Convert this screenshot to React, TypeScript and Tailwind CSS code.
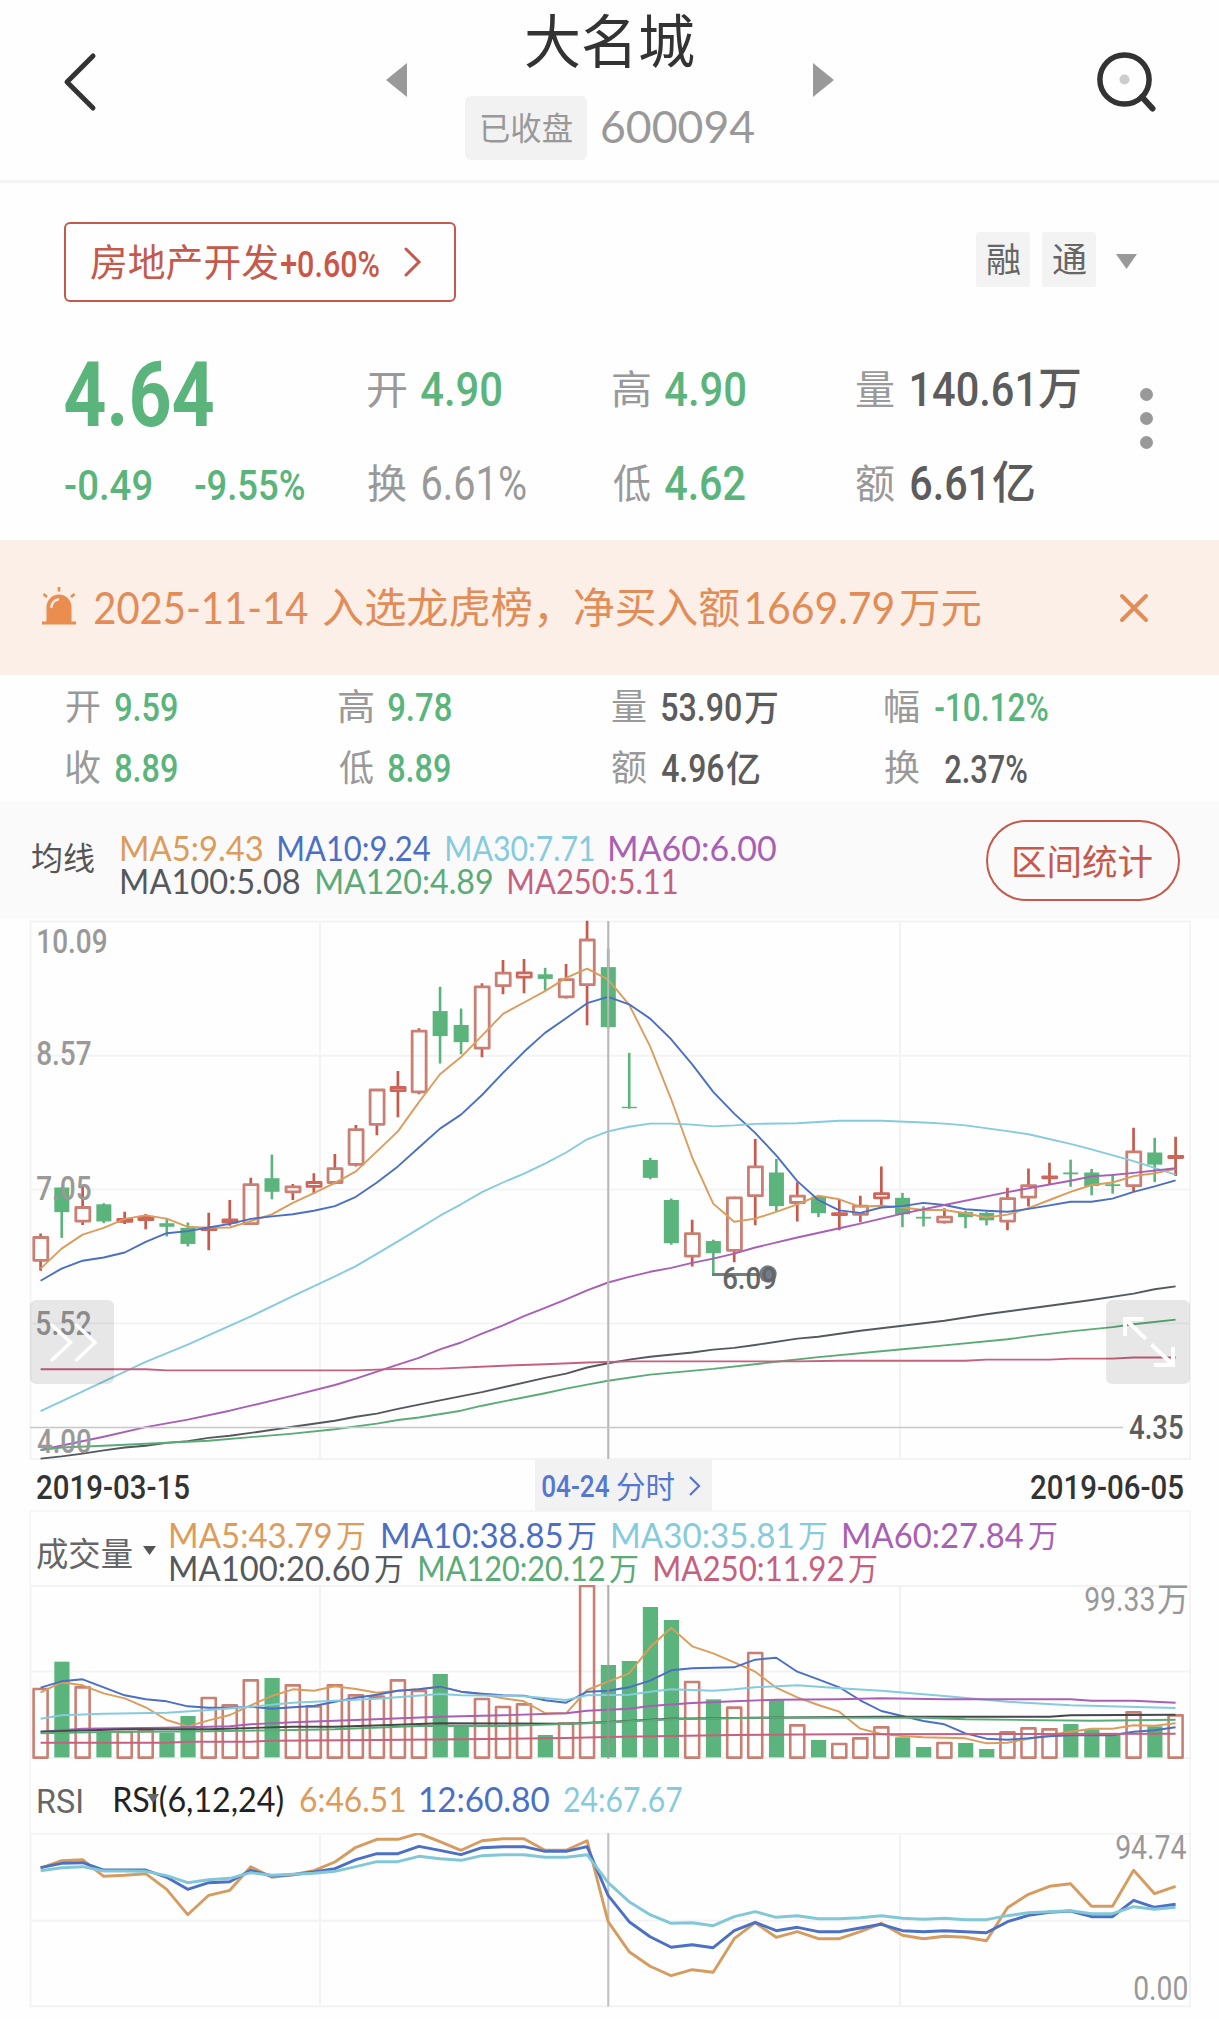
import { useLayoutEffect, useRef } from "react";
import type { ReactNode } from "react";

const DIN = "font-['Roboto','Noto_Sans_CJK_SC',sans-serif]";
const GEO = "font-['Lato','Noto_Sans_CJK_SC',sans-serif]";
const CJK = "font-['Noto_Sans_CJK_SC',sans-serif]";

type FitProps = { w: number; text: string; className?: string; cjk?: boolean; geo?: boolean };

/** One line of text whose ink is fitted to a given width. */
function Fit({ w, text, className = "", cjk, geo }: FitProps) {
  const ref = useRef<HTMLSpanElement>(null);
  useLayoutEffect(() => {
    const el = ref.current;
    const ctx = document.createElement("canvas").getContext("2d");
    if (!el || !ctx) return;
    const cs = getComputedStyle(el);
    ctx.font = `${cs.fontWeight} ${cs.fontSize} ${cs.fontFamily}`;
    const m = ctx.measureText(text);
    const ink = m.actualBoundingBoxLeft + m.actualBoundingBoxRight;
    const s = w / ink;
    el.style.transform = `translateX(${m.actualBoundingBoxLeft * s}px) scaleX(${s})`;
  }, [w, text]);
  return (
    <span className="inline-flex h-[1em] shrink-0 items-center leading-none" style={{ width: w }}>
      <span
        ref={ref}
        className={`inline-block origin-left whitespace-nowrap leading-none ${cjk ? CJK + " -mt-[0.1em]" : geo ? GEO : DIN} ${className}`}
      >
        {text}
      </span>
    </span>
  );
}

const cx = (i: number) => 40.6 + i * 21.0185;

const ORANGE = "#dc9c5c";
const BLUE = "#4a6fc4";
const CYAN = "#86cbdd";
const PURPLE = "#a85fb4";
const DARK = "#55585c";
const GREEN = "#5bab77";
const PINK = "#c6607f";
const UP = "#ca7f73";
const UPWICK = "#c65a4c";
const DOWN = "#5ab47b";

/** "index value" pairs, comma separated; missing indices are joined straight. */
function Line({ d, y, color, width = 1.9 }: { d: string; y: (v: number) => number; color: string; width?: number }) {
  const pts = d
    .split(",")
    .map((p) => p.trim().split(" ").map(Number))
    .map(([i, v]) => `${cx(i).toFixed(1)},${y(v).toFixed(1)}`)
    .join(" ");
  return <polyline points={pts} fill="none" stroke={color} strokeWidth={width} strokeLinejoin="round" />;
}
const dense = (a: number[]) => a.map((v, i) => `${i} ${v}`).join(",");

const candles: [string, number, number, number, number][] = [
  ["r", 906, 917, 981, 1010], ["g", 777, 777, 846, 918], ["r", 775, 833, 871, 882], ["g", 821, 824, 872, 877],
  ["r", 845, 866, 872, 879], ["r", 851, 860, 867, 894], ["g", 865, 877, 887, 914], ["g", 875, 890, 935, 942],
  ["r", 848, 891, 895, 953], ["r", 812, 868, 874, 884], ["r", 750, 769, 878, 882], ["g", 685, 751, 789, 810],
  ["r", 767, 775, 789, 812], ["r", 737, 763, 774, 795], ["r", 683, 724, 763, 768], ["r", 602, 615, 712, 718],
  ["r", 502, 504, 600, 631], ["r", 451, 497, 506, 580], ["r", 331, 339, 509, 516], ["g", 215, 283, 353, 430],
  ["g", 276, 322, 370, 404], ["r", 205, 215, 387, 412], ["r", 140, 177, 212, 236], ["r", 137, 176, 188, 233],
  ["g", 162, 180, 193, 225], ["r", 151, 195, 243, 248], ["r", 30, 84, 209, 323], ["g", 108, 160, 328, 332],
  ["g", 400, 551, 555, 556], ["g", 694, 700, 750, 754], ["g", 808, 812, 933, 937], ["r", 867, 906, 969, 998],
  ["g", 923, 927, 961, 1022], ["r", 803, 806, 953, 986], ["r", 641, 719, 800, 883], ["g", 697, 735, 829, 843],
  ["r", 762, 801, 819, 872], ["g", 800, 803, 849, 860], ["r", 812, 850, 853, 897], ["r", 800, 829, 852, 874],
  ["r", 718, 794, 806, 826], ["g", 792, 806, 852, 888], ["g", 830, 859, 864, 886], ["r", 835, 860, 873, 878],
  ["g", 842, 846, 860, 891], ["g", 846, 848, 869, 883], ["r", 778, 808, 871, 897], ["r", 724, 772, 804, 830],
  ["r", 708, 747, 750, 770], ["g", 699, 735, 740, 775], ["g", 725, 735, 773, 799], ["g", 740, 768, 773, 794],
  ["r", 610, 677, 772, 788], ["g", 638, 679, 713, 762], ["r", 635, 690, 693, 745],
];

const ma5 = [1004, 948, 909, 890, 865, 855, 864, 887, 890, 889, 871, 852, 820, 793, 764, 732, 676, 620, 538, 460, 412, 352, 291, 259, 227, 190, 164, 195, 265, 382, 530, 693, 822, 873, 864, 845, 824, 800, 810, 831, 828, 833, 840, 840, 849, 861, 853, 835, 812, 789, 770, 763, 745, 737, 725];
const ma10 = [1038, 1004, 982, 973, 959, 929, 905, 899, 889, 879, 865, 858, 852, 842, 829, 803, 763, 718, 665, 612, 573, 518, 456, 397, 344, 303, 261, 243, 264, 304, 362, 432, 509, 570, 624, 687, 759, 812, 841, 848, 833, 829, 820, 826, 838, 842, 845, 837, 827, 817, 817, 808, 789, 774, 757];

const ky = (v: number) => v / 2.8 - 9;

const GRID = "#f3f3f3";

function PriceChart() {
  return (
    <svg width="1219" height="541" viewBox="0 0 1219 541" className="block">
      <g stroke={GRID} strokeWidth="2" fill="none">
        <path d="M30.5 2.5H1190V540H30.5ZM30 136.7H1190M30 270.6H1190M30 404.6H1190M320 2V540M609 2V540M900 2V540" />
      </g>
      {candles.map(([t, h, a, b, l], i) => {
        const x = cx(i);
        if (t === "g")
          return (
            <g key={i} fill={DOWN}>
              <rect x={x - 1.2} y={ky(h)} width="2.6" height={ky(l) - ky(h)} />
              <rect x={x - 7.3} y={ky(a)} width="15" height={Math.max(1.4, ky(b) - ky(a))} />
            </g>
          );
        return (
          <g key={i}>
            <path d={`M${x} ${ky(h)}V${ky(a)}M${x} ${ky(b)}V${ky(l)}`} stroke={UPWICK} strokeWidth="2.7" fill="none" />
            <rect
              x={x - 6.8}
              y={ky(a)}
              width="14"
              height={Math.max(0.4, ky(b) - ky(a))}
              fill="none"
              stroke={b - a < 13 ? "#ce6558" : UP}
              strokeWidth={2.8}
              strokeLinejoin="round"
            />
          </g>
        );
      })}
      <Line y={ky} color={ORANGE} d={dense(ma5)} />
      <Line y={ky} color={BLUE} d={dense(ma10)} />
      <Line y={ky} color={CYAN} d="0 1403,5 1265,7 1217,10 1138,12 1081,14 1026,15 997,17 928,18 892,19 856,20 824,21 790,22 763,23 738,24 710,25 679,26 642,27 620,28 607,29 598,30 598,31 601,32 606,33 603,34 599,36 597,38 590,40 590,42 595,43 598,44 603,46 619,47 628,49 655,50 670,52 703,54 741" />
      <Line y={ky} color={PURPLE} d="0 1512,3 1475,5 1448,7 1427,9 1402,10 1388,12 1360,14 1330,15 1312,17 1273,18 1254,19 1230,20 1211,21 1186,22 1163,23 1137,24 1114,25 1090,26 1065,27 1043,28 1027,29 1013,30 1002,31 988,32 976,33 962,34 945,36 917,38 891,39 878,41 850,43 826,46 790,49 758,50 746,51 742,52 736,54 723" />
      <Line y={ky} color={DARK} d="0 1536,1 1530,2 1522,3 1513,4 1505,5 1500,6 1492,7 1487,8 1478,9 1472,10 1464,12 1447,14 1430,15 1419,16 1410,17 1397,18 1385,19 1373,21 1350,24 1310,25 1298,26 1281,27 1269,28 1259,29 1251,31 1239,32 1231,33 1226,34 1218,36 1200,37 1195,39 1178,41 1164,43 1150,45 1132,48 1108,50 1092,52 1074,53 1062,54 1054" />
      <Line y={ky} color={GREEN} d="0 1512,1 1505,3 1500,7 1489,8 1486,10 1476,12 1466,14 1454,16 1438,17 1428,18 1421,20 1402,21 1388,24 1353,25 1340,26 1329,27 1318,29 1301,32 1285,35 1265,37 1252,41 1230,43 1219,46 1202,47 1194,49 1180,51 1168,52 1160,54 1147" />
      <Line y={ky} color={PINK} d="0 1286,5 1286,6 1289,15 1289,17 1285,19 1284,22 1276,24 1272,26 1267,28 1264,36 1264,38 1262,44 1262,45 1259,48 1259,49 1256,51 1256,52 1253,54 1253" />
      <path d="M608.2 2V540" stroke="#b8b8b8" strokeWidth="2" />
      <path d="M30 508.5H1123" stroke="#c8c8c8" strokeWidth="1.6" />
      <path d="M712 355.5H768" stroke="#727d89" strokeWidth="3" />
      <circle cx="768" cy="355" r="8.7" fill="#727d89" />
    </svg>
  );
}

const vols: [string, number][] = [
  ["r", 714], ["g", 635], ["r", 709], ["g", 848], ["r", 843], ["r", 840], ["g", 848], ["g", 798], ["r", 741], ["r", 763], ["r", 688],
  ["g", 684], ["r", 703], ["r", 766], ["r", 703], ["r", 733], ["r", 737], ["r", 688], ["r", 720], ["g", 672], ["g", 830], ["r", 744],
  ["r", 768], ["r", 760], ["g", 855], ["r", 818], ["r", 405], ["g", 645], ["g", 633], ["g", 471], ["g", 510], ["r", 693], ["g", 748],
  ["r", 770], ["r", 606], ["g", 748], ["r", 823], ["g", 870], ["r", 879], ["r", 862], ["r", 829], ["g", 862], ["g", 891], ["r", 876],
  ["g", 879], ["g", 897], ["r", 844], ["r", 832], ["r", 835], ["g", 822], ["g", 838], ["g", 855], ["r", 784], ["g", 829], ["r", 793],
];
const v5 = [727, 697, 706, 730, 745, 772, 810, 829, 811, 795, 766, 738, 718, 722, 709, 717, 728, 722, 718, 710, 725, 733, 745, 754, 789, 790, 720, 695, 670, 592, 533, 589, 610, 637, 665, 713, 742, 765, 785, 836, 852, 858, 862, 863, 865, 880, 878, 866, 856, 845, 836, 836, 826, 827, 820];
const v10 = [713, 694, 688, 712, 736, 748, 754, 769, 773, 773, 770, 776, 772, 768, 755, 743, 734, 722, 718, 710, 725, 731, 736, 737, 751, 758, 725, 722, 712, 692, 661, 655, 653, 652, 629, 623, 665, 688, 712, 751, 783, 798, 813, 823, 850, 866, 869, 865, 859, 856, 855, 856, 845, 841, 832];

const vy = (v: number) => v / 3 - 135;

function VolumeChart() {
  return (
    <svg width="1219" height="174" viewBox="0 0 1219 174" className="block">
      <path d="M30.5 1H1190V173H30.5ZM30 86.500H1190M320 1V173M609 1V173M900 1V173" stroke={GRID} strokeWidth="2" fill="none" />
      {vols.map(([t, v], i) =>
        t === "g" ? (
          <rect key={i} x={cx(i) - 7.3} y={vy(v)} width="15.2" height={172.4 - vy(v)} fill={DOWN} />
        ) : (
          <rect key={i} x={cx(i) - 7} y={vy(v) + 1} width="14" height={171.6 - vy(v)} fill="none" stroke={UP} strokeWidth="2.6" strokeLinejoin="round" />
        ),
      )}
      <Line y={vy} color={ORANGE} d={dense(v5)} />
      <Line y={vy} color={BLUE} d={dense(v10)} />
      <Line y={vy} color={CYAN} d="0 806,1 796,3 791,6 788,8 780,10 770,12 758,14 752,16 746,19 732,20 736,22 737,23 739,25 750,26 736,28 734,29 725,30 718,32 722,33 718,34 712,36 706,38 715,40 722,43 738,46 755,49 766,54 774" />
      <Line y={vy} color={PURPLE} d="0 845,2 836,6 833,9 829,10 823,12 817,15 810,19 800,22 796,25 790,26 782,28 776,29 768,31 759,33 754,35 749,38 748,40 745,43 748,49 748,50 752,52 752,54 758" />
      <Line y={vy} color="#45484b" d="0 845,4 838,8 838,12 830,14 830,17 824,19 820,25 821,27 816,30 806,33 804,37 802,40 800,48 800,49 796,54 794" />
      <Line y={vy} color={GREEN} d="0 850,3 846,8 844,12 840,14 838,18 828,22 828,26 820,30 808,34 803,42 803,44 808,50 812,54 809" />
      <Line y={vy} color={PINK} d="0 878,6 878,7 875,10 875,11 872,16 870,20 868,25 864,27 861,30 858,33 855,38 853,54 851" />
      <path d="M608.2 0V174" stroke="#999" strokeOpacity="0.75" strokeWidth="2" />
    </svg>
  );
}

const r6 = [294, 272, 269, 319, 316, 311, 358, 434, 376, 361, 290, 322, 314, 302, 276, 232, 208, 208, 190, 215, 241, 212, 206, 206, 241, 241, 212, 455, 545, 589, 617, 599, 607, 506, 458, 502, 485, 506, 506, 485, 460, 496, 506, 499, 502, 512, 413, 373, 349, 341, 409, 409, 301, 371, 349];
const r12 = [293, 280, 278, 300, 300, 300, 322, 358, 338, 335, 301, 318, 314, 306, 296, 269, 251, 251, 229, 241, 254, 233, 230, 230, 244, 244, 230, 376, 455, 500, 532, 524, 533, 482, 457, 482, 472, 485, 485, 474, 463, 482, 485, 482, 485, 488, 455, 436, 427, 423, 440, 440, 391, 412, 403];
const r24 = [302, 293, 290, 303, 303, 304, 317, 338, 329, 325, 308, 316, 313, 310, 304, 290, 275, 275, 259, 266, 271, 257, 254, 254, 262, 262, 254, 338, 395, 434, 460, 458, 467, 440, 425, 442, 437, 446, 446, 443, 437, 445, 448, 445, 449, 449, 437, 428, 425, 422, 431, 431, 410, 418, 412];

const ry = (v: number) => v / 3 - 63;

function RsiChart() {
  return (
    <svg width="1219" height="176" viewBox="0 0 1219 176" className="block">
      <path d="M30.5 0.500H1190V173.300H30.5ZM30 87.700H1190M320 1V173M609 1V173M900 1V173" stroke={GRID} strokeWidth="2" fill="none" />
      <path d="M608.2 0V173.500" stroke="#c2c2c2" strokeWidth="2" />
      <Line y={ry} color="#d69c5f" width={2.9} d={dense(r6)} />
      <Line y={ry} color="#4b70c4" width={2.9} d={dense(r12)} />
      <Line y={ry} color="#82c7d7" width={2.9} d={dense(r24)} />
    </svg>
  );
}

function Cell({ label, ls, gap, children }: { label: string; ls: number; gap: number; children: ReactNode }) {
  return (
    <div className="flex items-center" style={{ gap }}>
      <div className="-mt-[3px] flex"><Fit cjk w={ls} text={label} className="text-[#999]" /></div>
      {children}
    </div>
  );
}

function Down({ w, h, color }: { w: number; h: number; color: string }) {
  return (
    <svg width={w} height={h} viewBox="0 0 10 10" preserveAspectRatio="none" className="block shrink-0">
      <path d="M0 0H10L5 10Z" fill={color} />
    </svg>
  );
}

const axis: [string, string, number][] = [
  ["10.09", "top-[6px] left-[38px]", 68],
  ["8.57", "top-[118px] left-[37px]", 54],
  ["7.05", "top-[253px] left-[37px]", 54],
  ["5.52", "top-[388px] left-[37px]", 54],
  ["4.00", "top-[506px] left-[37px]", 54],
];

export default function App() {
  return (
    <div className="w-[1219px] h-[2019px] overflow-hidden bg-[#fefefe] text-[#333]">
      <header className="flex h-[183px] items-start border-b-[3px] border-[#f4f4f4]">
        <svg width="36" height="62" viewBox="0 0 36 62" className="mt-[51px] ml-[62px] block" fill="none" stroke="#333" strokeWidth="5" strokeLinecap="round" strokeLinejoin="round">
          <path d="M31 5L5 31L31 57" />
        </svg>
        <svg width="21" height="34" className="mt-[63px] ml-[288px] block"><path d="M21 0V34L0 17Z" fill="#999" /></svg>
        <div className="ml-[58px] flex w-[290px] flex-col">
          <div className="mt-[12px] ml-[61px] flex text-[58px]"><Fit cjk w={168} text="大名城" className="text-[#333]" /></div>
          <div className="mt-[26px] flex items-center">
            <div className="flex h-[64px] w-[122px] items-center justify-center rounded-[6px] bg-[#f2f2f2] text-[32px]">
              <Fit cjk w={91} text="已收盘" className="text-[#999]" />
            </div>
            <div className="-mt-[3px] ml-[15px] flex text-[45px]"><Fit geo w={152} text="600094" className="text-[#999]" /></div>
          </div>
        </div>
        <svg width="21" height="34" className="mt-[63px] ml-[58px] block"><path d="M0 0V34L21 17Z" fill="#999" /></svg>
        <svg width="66" height="66" viewBox="0 0 66 66" className="mt-[49px] ml-[260px] block">
          <circle cx="30.5" cy="30.5" r="24.6" fill="none" stroke="#333" strokeWidth="5.5" />
          <path d="M48 48L58.5 59.5" stroke="#333" strokeWidth="6" strokeLinecap="round" />
          <circle cx="30.5" cy="30.5" r="5" fill="#ccc" />
        </svg>
      </header>

      <section className="flex h-[119px] items-end pl-[64px]">
        <div className="flex h-[80px] w-[392px] items-center rounded-[6px] border-2 border-[#c4594c] pl-[25px]">
          <div className="-mt-[1px] flex text-[38px]"><Fit cjk w={187} text="房地产开发" className="text-[#c4594c]" /></div>
          <div className="mt-[5px] ml-[3px] flex text-[37px]"><Fit w={98} text="+0.60%" className="font-medium text-[#cb5546]" /></div>
          <svg width="18" height="30" viewBox="0 0 18 30" className="ml-[25px] block" fill="none" stroke="#c4594c" strokeWidth="3" strokeLinecap="round"><path d="M2 2L15 15L2 28" /></svg>
        </div>
        <div className="mb-[15px] ml-[520px] flex items-center text-[34px]">
          <div className="flex h-[55px] w-[54px] items-center justify-center rounded-[3px] bg-[#f3f3f3]"><Fit cjk w={33} text="融" className="text-[#666]" /></div>
          <div className="ml-[12px] flex h-[55px] w-[54px] items-center justify-center rounded-[3px] bg-[#f3f3f3]"><Fit cjk w={33} text="通" className="text-[#666]" /></div>
          <div className="mt-[3px] ml-[20px]"><Down w={21} h={15} color="#999" /></div>
        </div>
      </section>

      <section className="flex h-[238px] pl-[65px]">
        <div className="flex w-[303px] flex-col pt-[48px]">
          <div className="flex text-[91px]"><Fit w={148} text="4.64" className="font-bold text-[#5ab47b]" /></div>
          <div className="mt-[23px] flex gap-[44px] text-[43px]">
            <Fit w={86} text="-0.49" className="font-medium text-[#5ab47b]" />
            <Fit w={109} text="-9.55%" className="font-medium text-[#5ab47b]" />
          </div>
        </div>
        <div className="grid grid-cols-[245px_243px_260px] grid-rows-[94px_94px] pt-[41px] text-[40px]">
          <Cell label="开" ls={38} gap={15}><div className="flex text-[48px]"><Fit w={80} text="4.90" className="font-medium text-[#5ab47b]" /></div></Cell>
          <Cell label="高" ls={37} gap={15}><div className="flex text-[48px]"><Fit w={80} text="4.90" className="font-medium text-[#5ab47b]" /></div></Cell>
          <Cell label="量" ls={38} gap={17}>
            <div className="flex items-center gap-[9px] text-[48px]"><Fit w={119} text="140.61" className="font-medium text-[#5c5c5c]" /><div className="-mt-[5px] flex text-[45px]"><Fit cjk w={41} text="万" className="font-medium text-[#5c5c5c]" /></div></div>
          </Cell>
          <Cell label="换" ls={38} gap={17}><div className="flex text-[48px]"><Fit w={103} text="6.61%" className="text-[#999]" /></div></Cell>
          <Cell label="低" ls={37} gap={15}><div className="flex text-[48px]"><Fit w={80} text="4.62" className="font-medium text-[#5ab47b]" /></div></Cell>
          <Cell label="额" ls={38} gap={17}>
            <div className="flex items-center gap-[10px] text-[48px]"><Fit w={72} text="6.61" className="font-medium text-[#5c5c5c]" /><div className="-mt-[5px] flex text-[45px]"><Fit cjk w={41} text="亿" className="font-medium text-[#5c5c5c]" /></div></div>
          </Cell>
        </div>
        <div className="mt-[86px] ml-[24px] flex flex-col gap-[11px]">
          <i className="block size-[13px] rounded-full bg-[#999]" />
          <i className="block size-[13px] rounded-full bg-[#999]" />
          <i className="block size-[13px] rounded-full bg-[#999]" />
        </div>
      </section>

      <section className="flex h-[135px] items-center bg-[#fbefe7] pl-[41px] text-[42px]">
        <svg width="36" height="38" viewBox="0 0 36 38" className="-mt-[3px] block" fill="#ea8d4f">
          <path d="M1 34.500h34v3H1zM5.500 35V20a12.500 12.500 0 0 1 25 0v15z" />
          <path d="M18 0v4.500M2.500 7l3.500 3M33.500 7l-3.500 3" stroke="#ea8d4f" strokeWidth="2.600" />
          <path d="M10.500 20a8 8 0 0 1 6.500-7.500" fill="none" stroke="#fbefe7" strokeWidth="2.400" strokeLinecap="round" />
        </svg>
        <div className="ml-[18px] flex items-center">
          <div className="-mt-[1px] flex text-[44px]"><Fit geo w={213} text="2025-11-14" className="text-[#e28d57]" /></div>
          <div className="ml-[15px] flex"><Fit cjk w={224} text="入选龙虎榜，" className="text-[#e28d57]" /></div>
          <div className="ml-[28px] flex"><Fit cjk w={164} text="净买入额" className="text-[#e28d57]" /></div>
          <div className="-mt-[1px] ml-[7px] flex text-[44px]"><Fit geo w={147} text="1669.79" className="text-[#e28d57]" /></div>
          <div className="ml-[7px] flex"><Fit cjk w={81} text="万元" className="text-[#e28d57]" /></div>
        </div>
        <svg width="30" height="30" viewBox="0 0 30 30" className="ml-[138px] block" stroke="#e28d57" strokeWidth="4" strokeLinecap="round"><path d="M3 3L27 27M27 3L3 27" /></svg>
      </section>

      <section className="grid h-[126px] grid-cols-[273px_273px_273px_300px] grid-rows-[61px_61px] pt-[2px] pl-[66px] text-[36px]">
        <Cell label="开" ls={34} gap={15}><Num w={62} t="9.59" green /></Cell>
        <Cell label="高" ls={34} gap={15}><Num w={63} t="9.78" green /></Cell>
        <Cell label="量" ls={34} gap={16}><Num w={79} t="53.90" /><div className="-mt-[2px] -ml-[13px] flex"><Fit cjk w={33} text="万" className="font-medium text-[#5c5c5c]" /></div></Cell>
        <Cell label="幅" ls={34} gap={16}><Num w={113} t="-10.12%" green /></Cell>
        <Cell label="收" ls={34} gap={15}><Num w={62} t="8.89" green /></Cell>
        <Cell label="低" ls={34} gap={15}><Num w={62} t="8.89" green /></Cell>
        <Cell label="额" ls={34} gap={16}><Num w={62} t="4.96" /><div className="-mt-[2px] -ml-[14px] flex"><Fit cjk w={34} text="亿" className="font-medium text-[#5c5c5c]" /></div></Cell>
        <Cell label="换" ls={34} gap={26}><div className="mt-[3px] flex"><Num w={82} t="2.37%" /></div></Cell>
      </section>

      <section className="flex h-[118px] items-center bg-[#fafafa] pl-[32px]">
        <div className="-mt-[4px] flex text-[32px]"><Fit cjk w={62} text="均线" className="text-[#555]" /></div>
        <div className="mt-[8px] ml-[28px] flex w-[864px] flex-col text-[34px]">
          <div className="flex h-[33px] items-center">
            <Fit geo w={140} text="MA5:9.43" className="text-[#dc9c5c]" />
            <div className="ml-[17px] flex"><Fit geo w={151} text="MA10:9.24" className="text-[#4a6fc4]" /></div>
            <div className="ml-[17px] flex"><Fit geo w={147} text="MA30:7.71" className="text-[#86cbdd]" /></div>
            <div className="ml-[16px] flex"><Fit geo w={166} text="MA60:6.00" className="text-[#a85fb4]" /></div>
          </div>
          <div className="flex h-[33px] items-center gap-[17px]">
            <Fit geo w={178} text="MA100:5.08" className="text-[#55585c]" />
            <Fit geo w={175} text="MA120:4.89" className="text-[#5bab77]" />
            <Fit geo w={168} text="MA250:5.11" className="text-[#c6607f]" />
          </div>
        </div>
        <div className="flex h-[81px] w-[194px] items-center justify-center rounded-full border-2 border-[#c4594c] pt-[3px] text-[35px]">
          <Fit cjk w={138} text="区间统计" className="text-[#c4594c]" />
        </div>
      </section>

      <section className="relative h-[541px]">
        <PriceChart />
        {axis.map(([t, c, w]) => (
          <div key={t} className={`absolute flex text-[33px] ${c}`}><Fit w={w} text={t} className="font-medium text-[#999]" /></div>
        ))}
        <div className="absolute top-[343px] left-[723px] flex text-[32px]"><Fit w={53} text="6.09" className="font-medium text-[#666]" /></div>
        <div className="absolute top-[492px] left-[1129px] flex text-[33px]"><Fit w={54} text="4.35" className="font-medium text-[#5c5c5c]" /></div>
        <div className="absolute top-[381px] left-[30px] h-[84px] w-[84px] rounded-[6px] bg-black/[0.09]">
          <svg width="84" height="84" fill="none" stroke="#fff" strokeWidth="3.5" strokeLinecap="round"><path d="M22 25L40.5 42.5L22 60M46.500 25L65 42.500L46.500 60" /></svg>
        </div>
        <div className="absolute top-[381px] left-[1106px] h-[84px] w-[84px] rounded-[6px] bg-black/[0.09]">
          <svg width="84" height="84" fill="none" stroke="#fff" strokeWidth="4"><path d="M37.500 19H19V36M19 19L40 39M45.500 44.500L67 65M67 47V65H48" /></svg>
        </div>
      </section>

      <section className="relative flex h-[50px] items-center justify-between pt-[6px] pr-[36px] pl-[37px] text-[33.5px]">
        <Fit w={152} text="2019-03-15" className="font-medium text-[#333]" />
        <div className="absolute top-0 left-[535px] flex h-[51px] w-[177px] items-center bg-[#f2f2f2] pl-[7px]">
          <div className="mt-[1px] flex text-[31px]"><Fit w={67} text="04-24" className="font-medium text-[#5577d2]" /></div>
          <div className="mt-[1px] ml-[8px] flex text-[31px]"><Fit cjk w={57} text="分时" className="text-[#5577d2]" /></div>
          <svg width="12" height="20" className="mt-[1px] ml-[15px] block" fill="none" stroke="#5577d2" strokeWidth="2.2"><path d="M1 1L10 10L1 19" /></svg>
        </div>
        <Fit w={152} text="2019-06-05" className="font-medium text-[#333]" />
      </section>

      <section className="ml-[29px] flex h-[75px] w-[1162px] items-center border-2 border-b-0 border-[#f6f6f6] pl-[6px]">
        <div className="mt-[11px] flex text-[33px]"><Fit cjk w={95} text="成交量" className="text-[#666]" /></div>
        <div className="mt-[4px] ml-[11px]"><Down w={13} h={9} color="#555" /></div>
        <div className="mt-[6px] ml-[15px] flex flex-col text-[34px]">
          <div className="flex h-[33px] items-center">
            <Unit w={160} t="MA5:43.79" c="text-[#dc9c5c]" />
            <div className="ml-[18px]"><Unit w={179} t="MA10:38.85" c="text-[#4a6fc4]" /></div>
            <div className="ml-[17px]"><Unit w={180} t="MA30:35.81" c="text-[#86cbdd]" /></div>
            <div className="ml-[17px]"><Unit w={179} t="MA60:27.84" c="text-[#a85fb4]" /></div>
          </div>
          <div className="flex h-[33px] items-center">
            <Unit w={198} t="MA100:20.60" c="text-[#55585c]" />
            <div className="ml-[17px]"><Unit w={184} t="MA120:20.12" c="text-[#5bab77]" /></div>
            <div className="ml-[17px]"><Unit w={188} t="MA250:11.92" c="text-[#c6607f]" /></div>
          </div>
        </div>
      </section>

      <section className="relative h-[174px]">
        <VolumeChart />
        <div className="absolute top-[-2px] left-[1085px] flex items-center gap-[4px] text-[33px]">
          <Fit w={69} text="99.33" className="text-[#999]" />
          <Fit cjk w={29} text="万" className="text-[#999]" />
        </div>
      </section>

      <section className="relative ml-[29px] flex h-[74px] w-[1162px] items-center border-x-2 border-[#f6f6f6] pl-[7px] text-[34px]">
        <div className="mt-[10px] flex text-[33px]"><Fit w={44} text="RSI" className="text-[#666]" /></div>
        <div className="mt-[5px] ml-[33px] flex items-center">
          <Fit geo w={168} text="RSI(6,12,24)" className="text-[#222]" />
          <div className="ml-[17px] flex"><Fit geo w={105} text="6:46.51" className="text-[#dc9c5c]" /></div>
          <div className="ml-[15px] flex"><Fit geo w={129} text="12:60.80" className="text-[#4a6fc4]" /></div>
          <div className="ml-[15px] flex"><Fit geo w={118} text="24:67.67" className="text-[#86cbdd]" /></div>
        </div>
        <div className="absolute top-[35px] left-[116px]"><Down w={12} h={9} color="#666" /></div>
      </section>

      <section className="relative h-[176px]">
        <RsiChart />
        <div className="absolute top-[-2px] left-[1116px] flex text-[33px]"><Fit w={70} text="94.74" className="text-[#999]" /></div>
        <div className="absolute top-[139px] left-[1134px] flex text-[33px]"><Fit w={53} text="0.00" className="text-[#999]" /></div>
      </section>
    </div>
  );
}

function Num({ w, t, green }: { w: number; t: string; green?: boolean }) {
  return (
    <div className="flex text-[38px]">
      <Fit w={w} text={t} className={green ? "font-medium text-[#5ab47b]" : "font-medium text-[#5c5c5c]"} />
    </div>
  );
}

function Unit({ w, t, c }: { w: number; t: string; c: string }) {
  return (
    <div className="flex items-center gap-[6px]">
      <Fit geo w={w} text={t} className={c} />
      <div className="flex text-[31px]"><Fit cjk w={28} text="万" className={c} /></div>
    </div>
  );
}
